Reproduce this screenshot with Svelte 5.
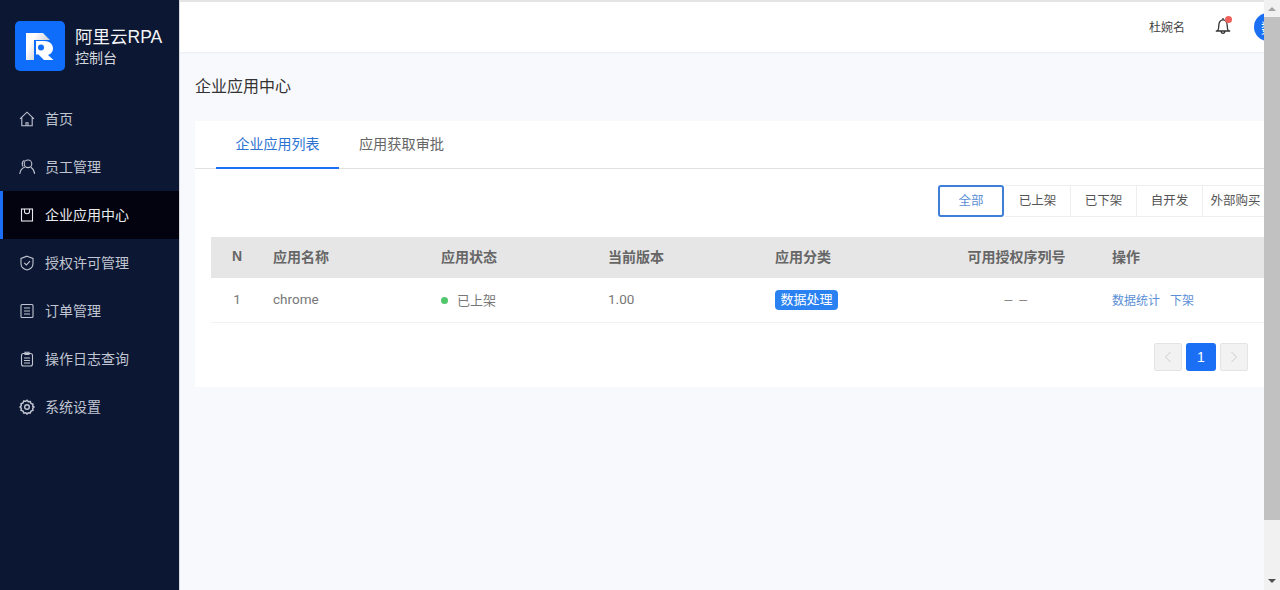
<script lang="ts">
  const menu = [
    { label: "首页", icon: "home" },
    { label: "员工管理", icon: "users" },
    { label: "企业应用中心", icon: "bag", active: true },
    { label: "授权许可管理", icon: "shield" },
    { label: "订单管理", icon: "list" },
    { label: "操作日志查询", icon: "clip" },
    { label: "系统设置", icon: "gear" },
  ];

  const filters = ["全部", "已上架", "已下架", "自开发", "外部购买"];
  const columns = ["N", "应用名称", "应用状态", "当前版本", "应用分类", "可用授权序列号", "操作"];
</script>

<div class="page">
  <aside class="sidebar">
    <div class="brand">
      <div class="logo">
        <svg width="50" height="50" viewBox="0 0 50 50">
          <defs>
            <linearGradient id="stem" x1="0" y1="0" x2="1" y2="0.6">
              <stop offset="0.3" stop-color="#ffffff" />
              <stop offset="1" stop-color="#b9bec8" />
            </linearGradient>
          </defs>
          <rect width="50" height="50" rx="5" fill="#0f6dfb" />
          <path d="M11 12h17l7 7H19v20h-8z" fill="url(#stem)" />
          <path d="M21 20h8c5.500 0 9 3 9 7.500 0 3.300-1.800 5.500-5 6.500l5.500 5H29l-5.500-5.500H21z" fill="#fff" />
          <circle cx="26" cy="26.500" r="3" fill="#0f6dfb" />
        </svg>
      </div>
      <div class="brand-text">
        <div class="brand-name">阿里云RPA</div>
        <div class="brand-sub">控制台</div>
      </div>
    </div>

    <nav class="menu">
      {#each menu as item}
        <div class="menu-item" class:active={item.active}>
          <svg class="menu-icon" width="16" height="16" viewBox="0 0 16 16" fill="none" stroke="currentColor" stroke-width="1.100">
            {#if item.icon === "home"}
              <path d="M1 7.800 8 1.200l7 6.600M2.800 6.500V14.800h10.400V6.500M7 14.800v-3h2v3" />
            {:else if item.icon === "users"}
              <circle cx="9" cy="4.800" r="3.800" />
              <path d="M.8 15c.3-3.500 2.200-6 5-6.800M15.800 15c-.5-3.500-2-5.600-3.800-6.800M5.500 1.500C4 2 3.200 3.400 3.200 5c0 1 .4 1.900 1 2.600" />
            {:else if item.icon === "bag"}
              <rect x="2.500" y="2" width="11" height="12" />
              <path d="M5.500 2v2.500c0 3 5 3 5 0V2" />
            {:else if item.icon === "shield"}
              <path d="M8 1.200 14 3.500v5c0 3.500-3 5.800-6 6.500-3-.7-6-3-6-6.500v-5z" />
              <path d="M5.200 7.800 7.400 10l3.600-3.800" />
            {:else if item.icon === "list"}
              <rect x="2" y="1.500" width="12" height="13" rx="1" />
              <path d="M5 5h6M5 8h6M5 11h6" />
            {:else if item.icon === "clip"}
              <rect x="2.500" y="2.500" width="11" height="12.500" rx="2" />
              <path d="M6 1.200h4v2.300H6zM5 7h6M5 9.500h6M5 12h6" />
            {:else}
              <path stroke-width="1.500" d="M8 1.200 9.300 2.800l2-.3.700 2 2 .7-.3 2L15 8l-1.300 1.300.3 2-2 .7-.7 2-2-.3L8 15l-1.300-1.300-2 .3-.7-2-2-.7.3-2L1 8l1.300-1.300-.3-2 2-.7.700-2 2 .3z" />
              <circle cx="8" cy="8" r="2.300" stroke-width="1.400" />
            {/if}
          </svg>
          <span class="menu-label">{item.label}</span>
        </div>
      {/each}
    </nav>
  </aside>

  <main class="main">
    <header class="topbar">
      <span class="user">杜婉名</span>
      <span class="bell">
        <svg width="16" height="18" viewBox="0 0 16 18" fill="none" stroke="#333" stroke-width="1.300">
          <path d="M.8 14h14.400M2.500 14c1.200-1.500 1.300-3 1.300-5.500 0-3.200 1.800-5.700 4.200-5.700s4.200 2.500 4.200 5.700c0 2.500.1 4 1.300 5.500M6.200 14.300c0 2.700 3.600 2.700 3.600 0M8 1v1.800" />
        </svg>
        <i class="dot"></i>
      </span>
      <span class="avatar">数</span>
    </header>

    <div class="content">
      <h1 class="title">企业应用中心</h1>

      <section class="card">
        <div class="tabs">
          <div class="tab current">企业应用列表</div>
          <div class="tab second">应用获取审批</div>
        </div>

        <div class="filters">
          {#each filters as f, i}
            <div class="filter" class:selected={i === 0}>{f}</div>
          {/each}
        </div>

        <div class="table">
          <div class="row head">
            {#each columns as c, i}
              <div class="cell" class:center={i === 0 || i === 5}>{c}</div>
            {/each}
          </div>
          <div class="row body">
            <div class="cell center latin">1</div>
            <div class="cell latin">chrome</div>
            <div class="cell status"><i class="green"></i>已上架</div>
            <div class="cell latin">1.00</div>
            <div class="cell"><span class="tag">数据处理</span></div>
            <div class="cell center dash">– –</div>
            <div class="cell ops"><span>数据统计</span><span>下架</span></div>
          </div>
        </div>

        <div class="pager">
          <button class="pg" aria-label="previous">
            <svg width="8" height="12" viewBox="0 0 8 12" fill="none" stroke="#ccc"><path d="M6.500 1 1.500 6l5 5" /></svg>
          </button>
          <button class="pg on">1</button>
          <button class="pg" aria-label="next">
            <svg width="8" height="12" viewBox="0 0 8 12" fill="none" stroke="#ccc"><path d="M1.500 1l5 5-5 5" /></svg>
          </button>
        </div>
      </section>
    </div>
  </main>

  <div class="scrollbar">
    <div class="arrow up"></div>
    <div class="thumb"></div>
    <div class="track"></div>
    <div class="arrow down"></div>
  </div>
</div>

<style>
  :global(body) {
    margin: 0;
    overflow: hidden;
    font-family: "Liberation Sans", "Noto Sans CJK SC", sans-serif;
  }

  .page {
    display: flex;
    height: 590px;
    width: 1280px;
    overflow: hidden;
    background: #f8f9fc;
  }

  .sidebar {
    width: 179px;
    flex-shrink: 0;
    background: #0c1733;
    border-right: 1px solid #d8dade;
    color: #c0c5d1;
  }

  .brand {
    display: flex;
    align-items: center;
    gap: 10px;
    height: 71px;
    padding: 21px 0 0 15px;
    box-sizing: border-box;
  }

  .logo {
    width: 50px;
    height: 50px;
  }

  .brand-name {
    font-size: 17.500px;
    line-height: 24px;
    color: #f2f3f6;
  }

  .brand-sub {
    font-size: 14px;
    line-height: 18px;
    color: #d4d7de;
  }

  .menu {
    margin-top: 24px;
  }

  .menu-item {
    display: flex;
    align-items: center;
    gap: 10px;
    height: 48px;
    padding-left: 19px;
    font-size: 14px;
    box-sizing: border-box;
  }

  .menu-label {
    padding-bottom: 2px;
  }

  .menu-item.active {
    background: #02030f;
    color: #e8eaee;
    border-left: 3px solid #1b6ff5;
    padding-left: 16px;
  }

  .menu-icon {
    flex-shrink: 0;
  }

  .main {
    flex: 1;
    min-width: 0;
    overflow: hidden;
    border-top: 2px solid #e4e4e4;
  }

  .topbar {
    display: flex;
    align-items: center;
    justify-content: flex-end;
    height: 50px;
    background: #fff;
    box-shadow: 0 1px 2px #e8ecf5;
    position: relative;
    overflow: hidden;
  }

  .user {
    font-size: 12px;
    color: #444;
    margin-right: 30px;
    padding-bottom: 1px;
  }

  .bell {
    position: relative;
    display: flex;
    margin-right: 23px;
    margin-top: -3px;
  }

  .dot {
    position: absolute;
    top: -1px;
    right: -1px;
    width: 7px;
    height: 7px;
    border-radius: 50%;
    background: #f0605a;
  }

  .avatar {
    display: flex;
    align-items: center;
    justify-content: center;
    width: 28px;
    height: 28px;
    margin-right: -18px;
    border-radius: 50%;
    background: #1b6ff5;
    color: #fff;
    font-size: 14px;
    flex-shrink: 0;
  }

  .content {
    padding: 0 0 0 15px;
  }

  .title {
    margin: 0;
    height: 69px;
    line-height: 69px;
    font-size: 16px;
    font-weight: 400;
    color: #333;
  }

  .card {
    width: 1091px;
    height: 266px;
    background: #fff;
  }

  .tabs {
    display: flex;
    height: 47px;
    padding-left: 21px;
    border-bottom: 1px solid #e0e2e6;
  }

  .tab {
    width: 123px;
    height: 48px;
    line-height: 47px;
    font-size: 14px;
    text-align: center;
    color: #666;
    box-sizing: border-box;
  }

  .tab.second {
    padding-left: 2px;
    font-size: 14.200px;
  }

  .tab.current {
    color: #2c73d2;
    border-bottom: 2px solid #1b6ff5;
  }

  .filters {
    display: flex;
    margin: 16px 0 0 743px;
    height: 32px;
  }

  .filter {
    width: 66px;
    flex-shrink: 0;
    box-sizing: border-box;
    line-height: 30px;
    text-align: center;
    font-size: 12.500px;
    color: #555;
    border: 1px solid #eceef0;
    border-left: none;
  }

  .filter.selected {
    margin-right: 1px;
    color: #5b8fd6;
    border: 2px solid #3f7fd8;
    border-radius: 3px;
    line-height: 28px;
  }

  .table {
    margin: 20px 0 0 16px;
  }

  .row {
    display: grid;
    grid-template-columns: 52px 168px 167px 167px 166px 171px 1fr;
    align-items: center;
  }

  .head {
    height: 41px;
    padding-bottom: 3px;
    box-sizing: border-box;
    background: #e6e6e6;
    font-size: 14px;
    font-weight: 700;
    color: #666;
  }

  .body {
    height: 45px;
    padding-bottom: 2px;
    font-size: 13px;
    color: #777;
    border-bottom: 1px solid #f0f1f3;
    box-sizing: border-box;
  }

  .cell {
    padding-left: 10px;
    white-space: nowrap;
  }

  .cell.center {
    padding-left: 0;
    text-align: center;
  }

  .latin {
    font-family: Roboto, sans-serif;
    font-size: 13.500px;
  }

  .dash {
    font-size: 14px;
    letter-spacing: 1.500px;
    color: #888;
  }

  .status {
    display: flex;
    align-items: center;
  }

  .green {
    width: 7px;
    height: 7px;
    margin: 2px 9px 0 0;
    border-radius: 50%;
    background: #52c66b;
  }

  .tag {
    display: inline-block;
    margin-top: 2px;
    padding: 0 5.500px;
    height: 20px;
    line-height: 19px;
    border-radius: 4px;
    background: #2a82f2;
    color: #fff;
    font-size: 13px;
    vertical-align: top;
  }

  .ops {
    color: #5b8fd6;
    font-size: 12px;
  }

  .ops span {
    margin-right: 10px;
  }

  .pager {
    display: flex;
    gap: 4px;
    margin: 20px 0 0 959px;
  }

  .pg {
    display: flex;
    align-items: center;
    justify-content: center;
    width: 28px;
    height: 28px;
    padding: 0;
    background: #f2f2f2;
    border: 1px solid #e4e4e4;
    border-radius: 2px;
  }

  .pg.on {
    width: 30px;
    background: #1b6ff5;
    border: none;
    border-radius: 3px;
    color: #fff;
    font-family: inherit;
    font-size: 14px;
  }

  .scrollbar {
    display: flex;
    flex-direction: column;
    width: 16px;
    flex-shrink: 0;
    background: #f1f1f1;
  }

  .arrow {
    height: 17px;
    position: relative;
  }

  .arrow::after {
    content: "";
    position: absolute;
    left: 4px;
    border-left: 4px solid transparent;
    border-right: 4px solid transparent;
  }

  .arrow.up::after {
    top: 7px;
    border-bottom: 4px solid #a3a3a3;
  }

  .arrow.down::after {
    top: 6px;
    border-top: 4px solid #505050;
  }

  .thumb {
    height: 503px;
    background: #c1c1c1;
  }

  .track {
    flex: 1;
  }
</style>
